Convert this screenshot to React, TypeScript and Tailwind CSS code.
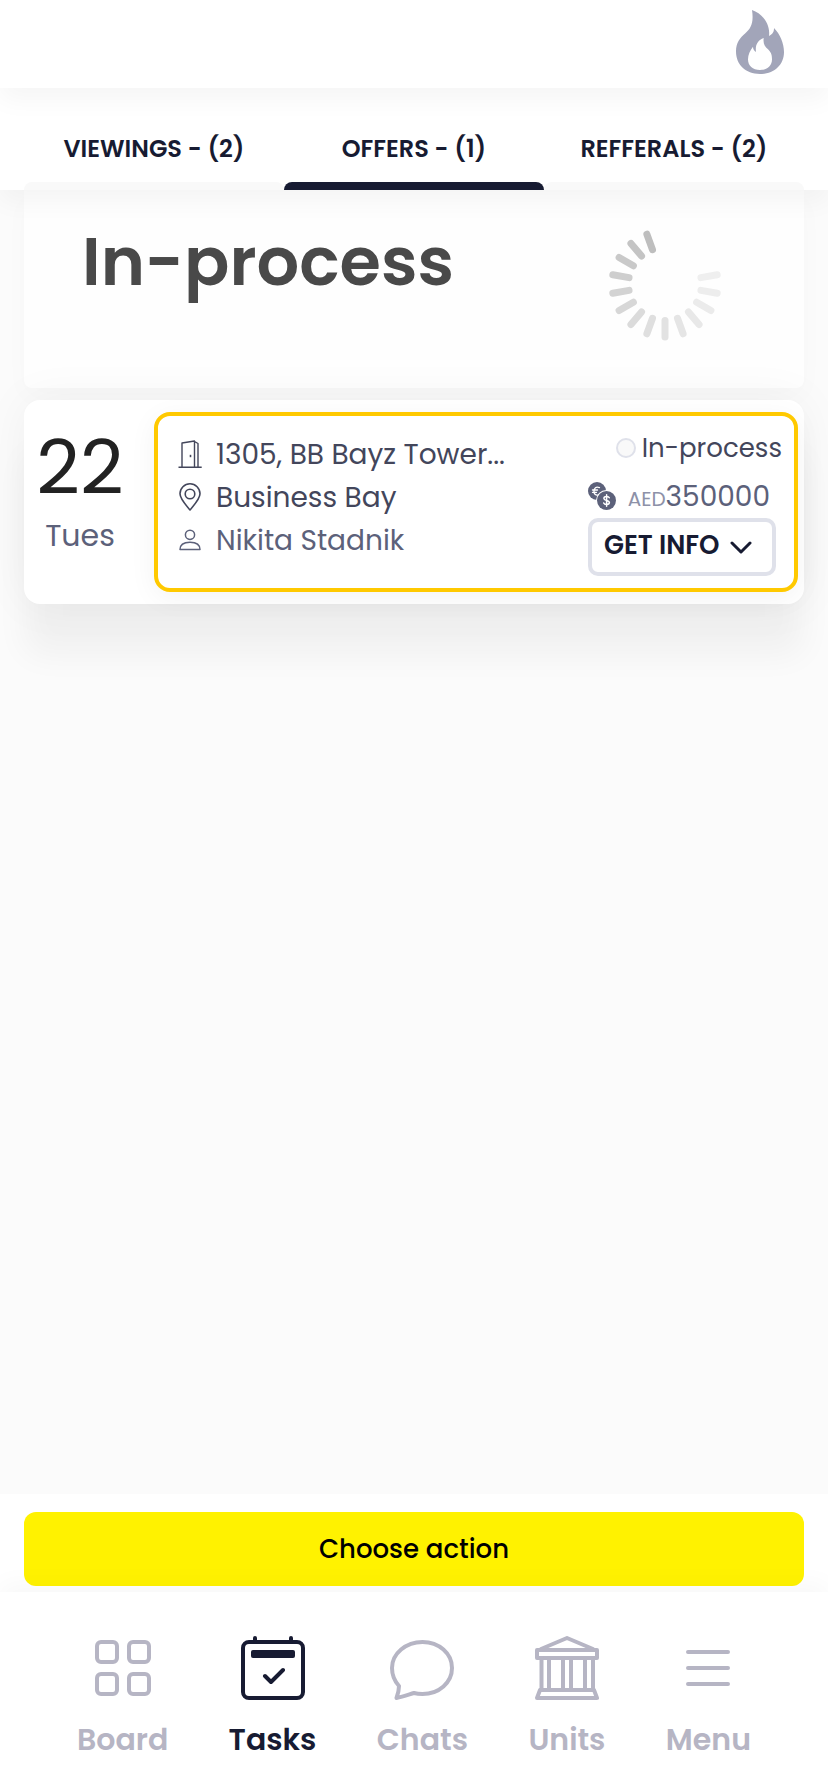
import type { ReactNode } from "react";

const tabs = [
  { label: "VIEWINGS - (2)", active: false },
  { label: "OFFERS - (1)", active: true },
  { label: "REFFERALS - (2)", active: false },
];

const spokes = Array.from({ length: 14 }, (_, i) => ({
  angle: 80 + i * 20,
  shade: 239 - Math.round(i * i * 0.15 + i * 1.8),
}));

function FlameIcon() {
  return (
    <svg viewBox="0 0 144 192" className="h-16 w-12" aria-hidden="true">
      <path
        fill="#a2a5b9"
        fillRule="evenodd"
        d="M48 0C78 10 104 42 99 78C108 74 115 66 114 54C132 72 144 100 144 126C144 165 114 192 72 192C28 192 0 164 0 124C0 98 12 84 28 70C44 56 54 40 48 0ZM83 84C66 90 57 104 60 126C54 122 51 117 51 110C42 122 36 134 36 148C36 168 50 180 72 180C94 180 108 168 108 148C108 132 104 126 96 118C86 108 81 102 83 84Z"
      />
    </svg>
  );
}

function Spinner() {
  return (
    <svg viewBox="-57 -57 114 114" className="size-[114px]" role="img" aria-label="Loading">
      {spokes.map(({ angle, shade }) => (
        <line
          key={angle}
          x1="0"
          x2="0"
          y1="-36.5"
          y2="-53"
          stroke={`rgb(${shade},${shade},${shade})`}
          strokeWidth="7"
          strokeLinecap="round"
          transform={`rotate(${angle})`}
        />
      ))}
    </svg>
  );
}

function DoorIcon() {
  return (
    <svg viewBox="0 0 24 28" className="h-7 w-6" fill="none" stroke="#43465b" strokeWidth="1.4" strokeLinejoin="round" aria-hidden="true">
      <path d="M0.500 27.200H23.700M4 27V3L16.500 1V27M16.500 1.500L20 3.500V27" />
      <path d="M12.500 14.800V17.200" strokeWidth="1.6" />
    </svg>
  );
}

function PinIcon() {
  return (
    <svg viewBox="0 0 24 28" className="h-7 w-6" fill="none" stroke="#43465b" strokeWidth="1.6" strokeLinejoin="round" aria-hidden="true">
      <path d="M12 27C8 22 2 16 2 10.800A10 10 0 0 1 22 10.800C22 16 16 22 12 27Z" />
      <circle cx="12" cy="11" r="4.800" />
    </svg>
  );
}

function PersonIcon() {
  return (
    <svg viewBox="0 0 24 28" className="h-7 w-6" fill="none" stroke="#5c617a" strokeWidth="1.5" strokeLinejoin="round" aria-hidden="true">
      <circle cx="12" cy="8.800" r="4.600" />
      <path d="M2 23.600C2 18.500 6 16.200 12 16.200S22 18.500 22 23.600Z" />
    </svg>
  );
}

function CoinsIcon() {
  return (
    <svg viewBox="0 0 28 28" className="size-7" fill="none" strokeLinecap="round" aria-hidden="true">
      <circle cx="9" cy="9" r="9" fill="#5c617a" />
      <path d="M11.500 5.600C8 4 6 6.200 6 9.200S8 14 10.500 12.800M4.500 8H9.500M4.500 10.300H8.500" stroke="#fff" strokeWidth="1.3" />
      <circle cx="18.500" cy="18.500" r="10.500" fill="#fff" />
      <circle cx="18.500" cy="18.500" r="9.500" fill="#5c617a" />
      <path d="M21.300 15.700C20.500 13.900 15.900 13.900 15.900 16.400C15.900 19 21.400 17.800 21.400 20.600C21.400 23 16.500 23 15.700 21M18.600 12.800V24.300" stroke="#fff" strokeWidth="1.5" />
    </svg>
  );
}

function BoardIcon() {
  return (
    <>
      {[6, 38].map((x) =>
        [6, 38].map((y) => (
          <rect key={`${x}-${y}`} x={x} y={y} width="20" height="20" rx="4" />
        )),
      )}
    </>
  );
}

function TasksIcon() {
  return (
    <>
      <rect x="2" y="6" width="60" height="56" rx="6" />
      <path d="M14 2V6M50 2V6M24 40L30 46L42 34" />
      <rect x="10" y="14" width="44" height="8" rx="2" fill="currentColor" stroke="none" />
    </>
  );
}

function ChatsIcon() {
  return (
    <path d="M32.500 6C49 6 62 17.500 62 32S49 58 32.500 58C29.500 58 26.500 57.700 24 57C19 58.500 13 61 6.500 62C8 58 9 54 9 50C4.500 45 2 39 2 32C2 17.500 16 6 32.500 6Z" />
  );
}

function UnitsIcon() {
  return (
    <>
      <path d="M6 13L32 2L58 13M2 14H62V22H2ZM5 54H59L62 62H2Z" />
      <path d="M6.500 22V54M14 22V54M28 22V54M36 22V54M50 22V54M58 22V54" />
    </>
  );
}

function MenuIcon() {
  return <path d="M12 16H52M12 32H52M12 48H52" />;
}

const navItems: { label: string; active?: boolean; icon: ReactNode }[] = [
  { label: "Board", icon: <BoardIcon /> },
  { label: "Tasks", active: true, icon: <TasksIcon /> },
  { label: "Chats", icon: <ChatsIcon /> },
  { label: "Units", icon: <UnitsIcon /> },
  { label: "Menu", icon: <MenuIcon /> },
];

export default function App() {
  return (
    <div className="flex min-h-screen flex-col overflow-x-hidden bg-[#fbfbfb] font-['Poppins','Inter',sans-serif]">
      <header className="relative z-30 flex h-22 items-start justify-end bg-white pt-2.5 pr-11 shadow-[0_12px_24px_rgba(0,0,0,0.04)]">
        <button type="button" aria-label="Hot offers">
          <FlameIcon />
        </button>
      </header>

      <nav aria-label="Task types" className="relative z-20 grid h-[102px] grid-cols-3 bg-white px-6 shadow-[0_12px_24px_rgba(0,0,0,0.04)]">
        {tabs.map(({ label, active }) => (
          <a key={label} href="#" aria-current={active ? "page" : undefined} className="flex flex-col pt-7">
            <span className="flex flex-1 items-center justify-center text-2xl font-semibold whitespace-nowrap text-[#171b32]">
              {label}
            </span>
            <span className={active ? "h-2 rounded-t-lg bg-[#171b32]" : "h-2 rounded-t-lg bg-[#f9f9f9]"} />
          </a>
        ))}
      </nav>

      <main className="flex flex-1 flex-col gap-3 px-6">
        <section className="flex h-[198px] items-start justify-between rounded-b-lg bg-[#fefefe] pt-9 pr-[82px] pl-[58px] shadow-[0_10px_28px_rgba(0,0,0,0.02)]">
          <h1 className="text-[67px] leading-[72px] font-semibold text-[#494949]">In-process</h1>
          <div className="pt-px">
            <Spinner />
          </div>
        </section>

        <article className="relative flex rounded-2xl bg-white shadow-[0_52px_32px_rgba(0,0,0,0.045),0_0_48px_rgba(0,0,0,0.05)]">
          <div className="flex w-28 shrink-0 flex-col items-center pt-7">
            <span className="text-[76px] leading-20 text-[#222]">22</span>
            <span className="mt-2 text-[30px] leading-10 text-[#5c617a]">Tues</span>
          </div>
          <div className="my-3 mr-1.5 ml-4.5 flex min-w-0 flex-1 justify-between rounded-2xl border-4 border-[#ffc900] bg-white pr-3 pb-3 pl-5 shadow-[0_6px_28px_rgba(0,0,0,0.05)]">
            <ul className="min-w-0 pt-4 text-[28px] leading-10 text-[#43465b]">
              <li className="flex h-[43px] items-center gap-3.5">
                <DoorIcon />
                <span className="pt-0.5 whitespace-nowrap">1305, BB Bayz Tower...</span>
              </li>
              <li className="flex h-[43px] items-center gap-3.5">
                <PinIcon />
                <span className="pt-0.5">Business Bay</span>
              </li>
              <li className="flex h-[43px] items-center gap-3.5 text-[#5c617a]">
                <PersonIcon />
                <span className="pt-0.5">Nikita Stadnik</span>
              </li>
            </ul>
            <div className="flex shrink-0 flex-col items-end pt-4">
              <div className="flex items-center gap-1.5 text-[26px] leading-8 text-[#43465b]">
                <span className="size-5 rounded-full border-2 border-[#dfe1ea] bg-[#f9f9f9]" />
                In-process
              </div>
              <div className="mt-2.5 mr-3 flex h-11 items-center gap-3 text-[#5c617a]">
                <CoinsIcon />
                <span className="pt-0.5 text-[28px] leading-10">
                  <span className="text-xl text-[#8d91a8]">AED</span>350000
                </span>
              </div>
              <button type="button" className="mr-1.5 flex h-[58px] w-47 items-center justify-between rounded-[10px] border-4 border-[#dfe1ea] pr-5 pb-1 pl-3 text-[26px] font-semibold whitespace-nowrap text-[#171b32]">
                GET INFO
                <svg viewBox="0 0 22 14" className="mt-1.5 h-3.5 w-5.5" fill="none" stroke="currentColor" strokeWidth="3" strokeLinecap="round" strokeLinejoin="round" aria-hidden="true">
                  <path d="M2 2L11 11L20 2" />
                </svg>
              </button>
            </div>
          </div>
        </article>
      </main>

      <div className="bg-white px-6 pt-4.5 pb-1.5">
        <button type="button" className="h-[74px] w-full rounded-xl bg-[#fff200] text-[26px] font-medium text-black">
          Choose action
        </button>
      </div>

      <nav aria-label="Main" className="relative flex h-[199px] items-start justify-between bg-white px-[77px] pt-11 shadow-[0_-8px_24px_rgba(0,0,0,0.03)]">
        {navItems.map(({ label, active, icon }) => (
          <a
            key={label}
            href="#"
            aria-current={active ? "page" : undefined}
            className={active ? "flex flex-col items-center text-[#171b32]" : "flex flex-col items-center text-[#b6b5c4]"}
          >
            <svg viewBox="0 0 64 64" className="size-16" fill="none" stroke="currentColor" strokeWidth="4" strokeLinecap="round" strokeLinejoin="round" aria-hidden="true">
              {icon}
            </svg>
            <span className="mt-5 text-[30px] leading-10 font-semibold">{label}</span>
          </a>
        ))}
      </nav>
    </div>
  );
}
